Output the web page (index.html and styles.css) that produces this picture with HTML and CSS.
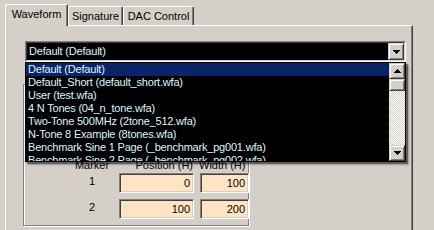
FILE: index.html
```html
<!DOCTYPE html>
<html>
<head>
  <title>Waveform</title>
  <link rel="stylesheet" href="styles.css">
</head>
<body>

<div class="tabs">
  <div class="tab active">Waveform</div>
  <div class="tab sig">Signature</div>
  <div class="tab dac">DAC Control</div>
</div>

<div class="panel">
  <div class="combo">
    <div class="combo-field">
      <span class="combo-text">Default (Default)</span>
      <span class="btn drop-btn">
        <svg width="7" height="4" viewBox="0 0 7 4"><path d="M0 0h7v1H0zM1 1h5v1H1zM2 2h3v1H2zM3 3h1v1H3z"/></svg>
      </span>
    </div>

    <div class="droplist">
      <ul class="items">
        <li class="selected">Default (Default)</li>
        <li>Default_Short (default_short.wfa)</li>
        <li>User (test.wfa)</li>
        <li>4 N Tones (04_n_tone.wfa)</li>
        <li>Two-Tone 500MHz (2tone_512.wfa)</li>
        <li>N-Tone 8 Example (8tones.wfa)</li>
        <li>Benchmark Sine 1 Page (_benchmark_pg001.wfa)</li>
        <li>Benchmark Sine 2 Page (_benchmark_pg002.wfa)</li>
      </ul>
      <div class="scrollbar">
        <span class="btn sb-btn">
          <svg width="7" height="4" viewBox="0 0 7 4"><path d="M3 0h1v1H3zM2 1h3v1H2zM1 2h5v1H1zM0 3h7v1H0z"/></svg>
        </span>
        <span class="btn thumb"></span>
        <span class="track"></span>
        <span class="btn sb-btn">
          <svg width="7" height="4" viewBox="0 0 7 4"><path d="M0 0h7v1H0zM1 1h5v1H1zM2 2h3v1H2zM3 3h1v1H3z"/></svg>
        </span>
      </div>
    </div>
  </div>

  <div class="group">
    <div class="marker-grid">
      <span class="hdr marker">Marker</span>
      <span class="hdr pos">Position (H)</span>
      <span class="hdr wid">Width (H)</span>

      <span class="rowlbl">1</span>
      <span class="field">0</span>
      <span class="field">100</span>

      <span class="rowlbl">2</span>
      <span class="field">100</span>
      <span class="field">200</span>
    </div>
  </div>
</div>

</body>
</html>
```

FILE: styles.css
```css
body {
  margin: 0;
  height: 230px;
  overflow: hidden;
  background: #d4d0c8;
  font-family: "Liberation Sans", Arial, sans-serif;
  font-size: 11px;
  line-height: 13px;
  color: #000;
}

/* tab strip */
.tabs {
  position: relative;
  z-index: 2;
  display: flex;
  align-items: flex-end;
  height: 21px;
  padding: 4px 0 0 5px;
}

.tab {
  box-sizing: border-box;
  height: 19px;
  padding-top: 3px;
  text-align: center;
  border: 1px solid;
  border-color: #fff #404040 transparent #fff;
  border-bottom: 0;
  border-radius: 2px 2px 0 0;
  box-shadow: inset -1px 0 #808080;
  background: #d4d0c8;
}

.tab.active {
  width: 63px;
  height: 22px;
  margin-bottom: -1px;
}

.tab.sig {
  width: 55px;
}

.tab.dac {
  width: 71px;
}

.panel {
  box-sizing: border-box;
  width: 408px;
  height: 215px;
  margin-left: 5px;
  padding: 15px 0 0 19px;
  border-top: 1px solid #fff;
  border-left: 1px solid #fff;
  border-right: 1px solid #404040;
  box-shadow: inset -1px 0 #808080;
}

/* combo box */
.combo {
  position: relative;
  z-index: 3;
  box-sizing: border-box;
  width: 381px;
  height: 21px;
  border: 1px solid;
  border-color: #808080 #fff #fff #808080;
}

.combo-field {
  display: flex;
  height: 17px;
  border: 1px solid;
  border-color: #404040 #d4d0c8 #d4d0c8 #404040;
  background: #000;
}

.combo-text {
  flex: 1;
  padding: 2px 0 0 2px;
  letter-spacing: -0.2px;
  color: #dff6ff;
}

.btn {
  box-sizing: border-box;
  display: flex;
  align-items: center;
  justify-content: center;
  background: #d4d0c8;
  border: 1px solid;
  border-color: #d4d0c8 #404040 #404040 #d4d0c8;
  box-shadow: inset 1px 1px #fff, inset -1px -1px #808080;
}

.drop-btn {
  width: 16px;
  height: 17px;
}

/* popup list */
.droplist {
  position: absolute;
  top: 20px;
  left: -1px;
  box-sizing: border-box;
  display: flex;
  width: 381px;
  height: 100px;
  border: 1px solid #000;
  background: #000;
  box-shadow: 2px 2px 1px rgba(0, 0, 0, 0.45), 3px 3px 2px rgba(0, 0, 0, 0.2);
}

.items {
  flex: 1;
  margin: 0;
  padding: 0;
  list-style: none;
  overflow: hidden;
}

.items li {
  height: 13px;
  padding-left: 2px;
  white-space: nowrap;
  letter-spacing: -0.2px;
  color: #dff6ff;
}

.items li.selected {
  background: #0a246a;
}

.scrollbar {
  display: flex;
  flex-direction: column;
  width: 16px;
}

.sb-btn {
  height: 16px;
}

.thumb {
  height: 12px;
}

.track {
  flex: 1;
  background-image: repeating-conic-gradient(#fff 0 25%, #d4d0c8 0 50%);
  background-size: 2px 2px;
}

/* marker group */
.group {
  box-sizing: border-box;
  width: 226px;
  margin: 22px 0 0 -2px;
  padding: 74px 0 6px;
  border: 1px solid #808080;
  box-shadow: 1px 1px 0 #fff, inset 1px 1px 0 #fff;
}

.marker-grid {
  display: grid;
  grid-template-columns: 89px 75px 49px;
  grid-template-rows: 14px 26px 20px;
  column-gap: 6px;
  align-items: start;
}

.marker {
  padding-left: 47px;
  text-align: center;
}

.pos {
  padding-right: 1px;
  text-align: right;
}

.wid {
  margin-left: -1px;
}

.rowlbl {
  padding-left: 47px;
  text-align: center;
  line-height: 16px;
}

.field {
  box-sizing: border-box;
  height: 20px;
  padding-right: 3px;
  line-height: 18px;
  text-align: right;
  background: #ffe4c4;
  border: 1px solid;
  border-color: #808080 #fff #fff #808080;
  box-shadow: inset 1px 1px #404040, inset -1px -1px #d4d0c8;
}
```
